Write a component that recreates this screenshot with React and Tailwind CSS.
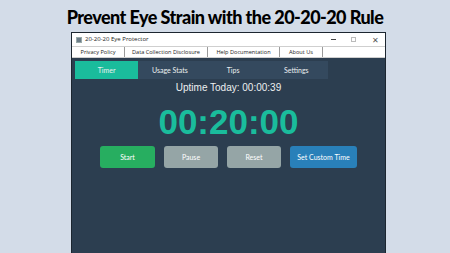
export default function App() {
  const menu = [
    { label: "Privacy Policy", w: "w-[53px]" },
    { label: "Data Collection Disclosure", w: "w-[83px]" },
    { label: "Help Documentation", w: "w-[72px]" },
    { label: "About Us", w: "w-[43px]" },
  ];
  const tabs = ["Timer", "Usage Stats", "Tips", "Settings"];

  return (
    <div className="w-[450px] h-[253px] overflow-hidden bg-[#d3dce8] flex flex-col font-['Lato',sans-serif]">
      {/* heading */}
      <h1 className="h-[32px] pt-[6px] text-center text-[18px] leading-[22px] font-black text-black tracking-[-0.55px]">
        Prevent Eye Strain with the 20-20-20 Rule
      </h1>

      {/* app window */}
      <div className="w-[315px] flex-1 ml-[71px] border border-b-0 border-[#1c2630] flex flex-col bg-[#2c3e50]">
        {/* title bar */}
        <div className="h-[13px] bg-white flex items-center pl-[4px] text-[6px] text-[#222] font-['Open_Sans',sans-serif]">
          <span className="w-[6px] h-[6px] bg-[#6b7c88] border border-[#9aa] mr-[3px]"></span>
          <span>20-20-20 Eye Protector</span>
          <div className="ml-auto flex items-center text-[#555]">
            <span className="w-[5px] h-px bg-[#444] mr-[15px]"></span>
            <span className="w-[5px] h-[5px] border border-[#bbb] mr-[16px]"></span>
            <span className="text-[8px] leading-none mr-[6px]">✕</span>
          </div>
        </div>

        {/* menu row */}
        <div className="h-[12px] bg-white flex border-t border-b border-[#cfcfcf] text-[5.6px] text-[#222] font-['Open_Sans',sans-serif]">
          {menu.map((m) => (
            <div key={m.label} className={`${m.w} border-r border-[#9a9a9a] flex items-center justify-center`}>
              {m.label}
            </div>
          ))}
        </div>

        {/* content */}
        <div className="flex-1 pt-[3px] pl-[3px] flex flex-col">
          <div className="flex w-[253px] h-[18px] bg-[#34495e] text-[7px] text-[#ecf0f1]">
            {tabs.map((t, i) => (
              <div
                key={t}
                className={`flex-1 flex items-center justify-center ${i === 0 ? "bg-[#1abc9c]" : ""}`}
              >
                {t}
              </div>
            ))}
          </div>

          <div className="flex flex-col items-center pr-[3px] font-['Liberation_Sans',sans-serif]">
            <div className="mt-[3px] text-[10px] leading-[12px] text-[#ecf0f1]">Uptime Today: 00:00:39</div>
            <div className="mt-[10px] text-[35px] leading-[35px] font-bold text-[#1abc9c]">00:20:00</div>
            <div className="mt-[7px] flex gap-[9px] text-[7px] text-white font-['Lato',sans-serif]">
              <button className="w-[55px] h-[22px] rounded-[3px] bg-[#27ae60]">Start</button>
              <button className="w-[54px] h-[22px] rounded-[3px] bg-[#95a5a6]">Pause</button>
              <button className="w-[54px] h-[22px] rounded-[3px] bg-[#95a5a6]">Reset</button>
              <button className="w-[67px] h-[22px] rounded-[3px] bg-[#2980b9]">Set Custom Time</button>
            </div>
          </div>
        </div>
      </div>
    </div>
  );
}
